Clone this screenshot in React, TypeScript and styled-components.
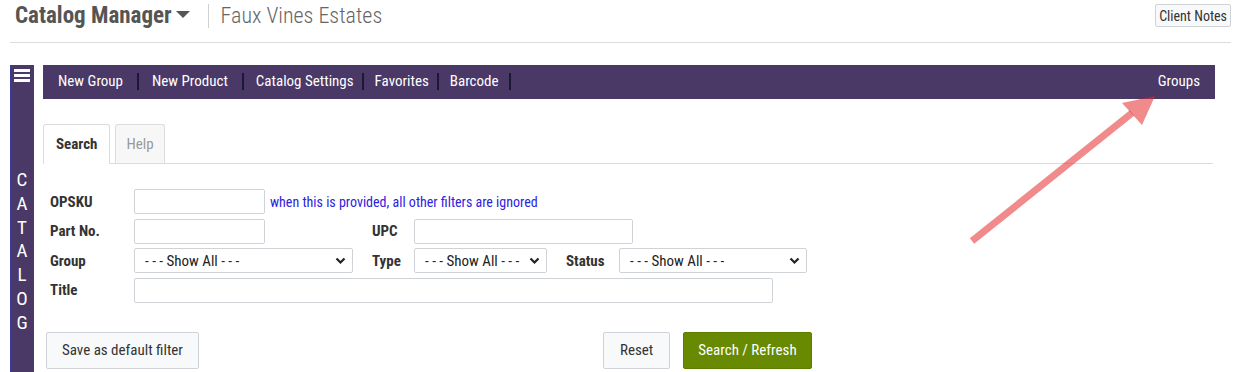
import React from "react";
import styled, { createGlobalStyle } from "styled-components";

const FONT = `"Roboto Condensed", "Liberation Sans Narrow", "Arial Narrow", "DejaVu Sans Condensed", Roboto, sans-serif`;
const PURPLE = "#4a3866";

const GlobalStyle = createGlobalStyle`
  html, body {
    margin: 0;
    padding: 0;
    background: #fff;
    overflow: hidden;
  }
  body {
    font-family: ${FONT};
    font-stretch: condensed;
    color: #333;
  }
`;

// left / right padding per item, as measured from the menu
const navItems: { label: string; pl: number; pr: number }[] = [
  { label: "New Group", pl: 13, pr: 14 },
  { label: "New Product", pl: 13, pr: 14 },
  { label: "Catalog Settings", pl: 12, pr: 8 },
  { label: "Favorites", pl: 11, pr: 8 },
  { label: "Barcode", pl: 11, pr: 10 },
];
const sideLetters = ["C", "A", "T", "A", "L", "O", "G"];

const Chevron = () => (
  <svg width="11" height="8" viewBox="0 0 11 8">
    <path d="M1.5 1.5 L5.5 5.5 L9.5 1.5" fill="none" stroke="#222" strokeWidth="2.2" />
  </svg>
);

const Bars = () => (
  <svg width="16" height="13" viewBox="0 0 16 13">
    <rect x="0" y="0" width="16" height="3" fill="#fff" />
    <rect x="0" y="5" width="16" height="3" fill="#fff" />
    <rect x="0" y="10" width="16" height="3" fill="#fff" />
  </svg>
);

const Select: React.FC<{ width: number }> = ({ width }) => (
  <SelectWrap style={{ width }}>
    <SelectBox>- - - Show All - - -</SelectBox>
    <ChevronSpot>
      <Chevron />
    </ChevronSpot>
  </SelectWrap>
);

const App: React.FC = () => {
  return (
    <Page>
      <GlobalStyle />
      <TopBar>
        <Brand>
          Catalog Manager
          <Caret />
        </Brand>
        <Divider />
        <Client>Faux Vines Estates</Client>
        <NotesButton>Client Notes</NotesButton>
      </TopBar>
      <Main>
        <SideRail>
          <Bars />
          <SideLetters>
            {sideLetters.map((l, i) => (
              <SideLetter key={i}>{l}</SideLetter>
            ))}
          </SideLetters>
        </SideRail>
        <Content>
          <NavBar>
            <NavList>
              {navItems.map((n) => (
                <NavItem key={n.label} pl={n.pl} pr={n.pr}>
                  {n.label}
                </NavItem>
              ))}
            </NavList>
            <NavRight>Groups</NavRight>
          </NavBar>
          <Tabs>
            <Tab active>Search</Tab>
            <Tab>Help</Tab>
          </Tabs>
          <FormGrid>
            <Label>OPSKU</Label>
            <Cell span={5}>
              <TextInput style={{ width: 131 }} />
              <Hint>when this is provided, all other filters are ignored</Hint>
            </Cell>

            <Label>Part No.</Label>
            <Cell>
              <TextInput style={{ width: 131 }} />
            </Cell>
            <Label>UPC</Label>
            <Cell span={3}>
              <TextInput style={{ width: 219 }} />
            </Cell>

            <Label>Group</Label>
            <Cell>
              <Select width={219} />
            </Cell>
            <Label>Type</Label>
            <Cell>
              <Select width={133} />
            </Cell>
            <Label>Status</Label>
            <Cell>
              <Select width={188} />
            </Cell>

            <Label>Title</Label>
            <Cell span={5}>
              <TextInput style={{ width: 639 }} />
            </Cell>
          </FormGrid>
          <ButtonRow>
            <Button pad={15}>Save as default filter</Button>
            <ButtonGroup>
              <Button pad={16}>Reset</Button>
              <Button pad={14} primary>
                Search / Refresh
              </Button>
            </ButtonGroup>
          </ButtonRow>
        </Content>
      </Main>
      <Annotation width="1241" height="372" viewBox="0 0 1241 372">
        <line x1="972" y1="241" x2="1132" y2="113" stroke="rgba(230,40,40,0.54)" strokeWidth="7" />
        <polygon points="1155,96 1122,103 1142,125" fill="rgba(230,40,40,0.54)" />
      </Annotation>
    </Page>
  );
};

const Page = styled.div`
  position: relative;
  width: 1241px;
  height: 372px;
  padding: 0 10px;
  box-sizing: border-box;
  overflow: hidden;
`;

const TopBar = styled.div`
  display: flex;
  align-items: center;
  height: 43px;
  padding: 0 0 11px 5px;
  border-bottom: 1px solid #dcdcdc;
  box-sizing: border-box;
`;

const Brand = styled.div`
  display: flex;
  align-items: center;
  font-size: 23px;
  font-weight: 700;
  color: #555;
`;

const Caret = styled.span`
  display: inline-block;
  margin-left: 4px;
  margin-top: -2px;
  border-left: 7px solid transparent;
  border-right: 7px solid transparent;
  border-top: 7px solid #555;
`;

const Divider = styled.div`
  width: 1px;
  height: 24px;
  background: #d0d0d0;
  margin: 0 12px 0 18px;
`;

const Client = styled.div`
  font-size: 22px;
  font-weight: 300;
  color: #666;
`;

const NotesButton = styled.button`
  margin-left: auto;
  font-family: ${FONT};
  font-stretch: condensed;
  font-size: 14px;
  color: #333;
  background: #f8f9fa;
  border: 1px solid #cfd2d6;
  border-radius: 2px;
  height: 23px;
  padding: 0 3px;
`;

const Main = styled.div`
  display: flex;
  gap: 9px;
  margin-top: 22px;
  margin-right: 16px;
`;

const SideRail = styled.div`
  width: 24px;
  flex: none;
  background: ${PURPLE};
  box-shadow: inset 1px 0 0 #3a3a9a;
  display: flex;
  flex-direction: column;
  align-items: center;
  padding-top: 4px;
  height: 320px;
  box-sizing: border-box;
`;

const SideLetters = styled.div`
  display: flex;
  flex-direction: column;
  align-items: center;
  margin-top: 86px;
`;

const SideLetter = styled.span`
  color: #fff;
  font-size: 19px;
  line-height: 23.8px;
`;

const Content = styled.div`
  flex: 1;
  display: flex;
  flex-direction: column;
`;

const NavBar = styled.div`
  display: flex;
  align-items: center;
  height: 34px;
  padding: 0 15px 2px 0;
  box-sizing: border-box;
  background: ${PURPLE};
  box-shadow: inset 1px 0 0 #3a3a9a;
  color: #fff;
  font-size: 15px;
`;

const NavList = styled.div`
  display: flex;
  align-items: center;
  padding-left: 2px;
`;

const NavItem = styled.span<{ pl: number; pr: number }>`
  padding: 0 ${(p) => p.pr}px 0 ${(p) => p.pl}px;
  border-right: 2px solid #1c1834;
  line-height: 17px;
`;

const NavRight = styled.span`
  margin-left: auto;
`;

const Tabs = styled.div`
  display: flex;
  gap: 5px;
  margin-top: 25px;
  border-bottom: 1px solid #dcdcdc;
  margin-right: 2px;
`;

const Tab = styled.div<{ active?: boolean }>`
  height: 38px;
  display: flex;
  align-items: center;
  padding: 0 ${(p) => (p.active ? 12 : 10)}px;
  font-size: 15px;
  font-weight: ${(p) => (p.active ? 700 : 400)};
  color: ${(p) => (p.active ? "#333" : "#999")};
  background: ${(p) => (p.active ? "#fff" : "#f7f7f8")};
  border: 1px solid #dcdcdc;
  border-bottom: none;
  border-radius: 3px 3px 0 0;
  margin-bottom: ${(p) => (p.active ? "-1px" : "0")};
  padding-bottom: ${(p) => (p.active ? "1px" : "0")};
`;

const FormGrid = styled.div`
  display: grid;
  grid-template-columns: 84px 238px 42px 152px 53px 188px;
  grid-auto-rows: 25px;
  row-gap: 4.5px;
  margin: 25px 0 0 7px;
`;

const Label = styled.div`
  display: flex;
  align-items: center;
  font-size: 15px;
  font-weight: 700;
  color: #333;
`;

const Cell = styled.div<{ span?: number }>`
  display: flex;
  align-items: center;
  grid-column: span ${(p) => p.span ?? 1};
`;

const TextInput = styled.input`
  height: 25px;
  box-sizing: border-box;
  border: 1px solid #cfd3d8;
  border-radius: 2px;
  padding: 0 6px;
  font-family: ${FONT};
  font-size: 15px;
`;

const Hint = styled.span`
  margin-left: 5px;
  font-size: 14px;
  color: #2d22e0;
`;

const SelectWrap = styled.div`
  position: relative;
  height: 25px;
  box-sizing: border-box;
  border: 1px solid #cfd3d8;
  border-radius: 2px;
  display: flex;
  align-items: center;
`;

const SelectBox = styled.span`
  padding-left: 10px;
  font-size: 15px;
  color: #222;
`;

const ChevronSpot = styled.span`
  position: absolute;
  right: 6px;
  top: 8px;
  display: flex;
`;

const ButtonRow = styled.div`
  display: grid;
  grid-template-columns: 557px auto;
  margin: 29px 0 0 3px;
`;

const ButtonGroup = styled.div`
  display: flex;
  gap: 13px;
`;

const Button = styled.button<{ primary?: boolean; pad: number }>`
  justify-self: start;
  height: 37px;
  padding: 0 ${(p) => p.pad}px;
  font-family: ${FONT};
  font-stretch: condensed;
  font-size: 15px;
  border-radius: 2px;
  color: ${(p) => (p.primary ? "#fff" : "#333")};
  background: ${(p) => (p.primary ? "#678a00" : "#f8f9fa")};
  border: 1px solid ${(p) => (p.primary ? "#5d7d00" : "#cfd2d6")};
`;

const Annotation = styled.svg`
  position: absolute;
  left: 0;
  top: 0;
  pointer-events: none;
`;

export default App;
